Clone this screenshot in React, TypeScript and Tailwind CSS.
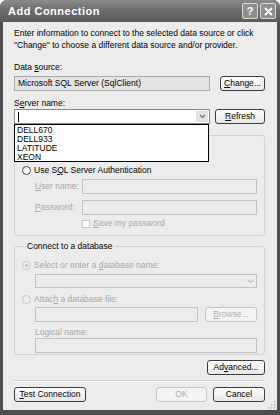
import React from 'react'

const U = ({ children }: { children: React.ReactNode }) => <span className="underline">{children}</span>

const XpButton = ({
  children,
  className = '',
  disabled = false,
}: {
  children: React.ReactNode
  className?: string
  disabled?: boolean
}) => (
  <div
    className={`h-[15px] flex items-center justify-center rounded-[3px] border text-[8.5px] ${
      disabled
        ? 'border-[#c4c4c4] text-[#b0b0b0] bg-[#f4f4f4]'
        : 'border-[#3c3c3c] text-black bg-gradient-to-b from-white to-[#e6e6e6]'
    } ${className}`}
  >
    {children}
  </div>
)

const DisabledBox = ({ className = '' }: { className?: string }) => (
  <div className={`h-[15px] border border-[#c2c2c2] bg-[#ececec] ${className}`} />
)

const Chevron = ({ color }: { color: string }) => (
  <svg width="7" height="5" viewBox="0 0 7 5">
    <path d="M1 1 L3.5 3.5 L6 1" fill="none" stroke={color} strokeWidth="1.2" />
  </svg>
)

const Radio = ({ disabled = false, dot = false }: { disabled?: boolean; dot?: boolean }) => (
  <div
    className={`w-[9px] h-[9px] rounded-full border flex items-center justify-center ${
      disabled ? 'border-[#c8c8c8] bg-[#ededed]' : 'border-[#444] bg-white'
    }`}
  >
    {dot && <div className="w-[3px] h-[3px] rounded-full bg-[#c0c0c0]" />}
  </div>
)

const servers = ['DELL670', 'DELL933', 'LATITUDE', 'XEON']

export default function App() {
  return (
    <div
      className="w-[280px] h-[415px] bg-[#4e4e4e] rounded-t-[7px] flex flex-col overflow-hidden"
      style={{ fontFamily: '"Liberation Sans", Arial, sans-serif' }}
    >
      {/* Title bar */}
      <div className="h-[22px] shrink-0 flex items-center pl-[8px] pr-[4px] bg-gradient-to-b from-[#8c8c8c] via-[#6a6a6a] to-[#5c5c5c]">
        <span className="text-white font-bold text-[11px] tracking-[0.5px] flex-1">Add Connection</span>
        <div className="flex gap-[2px]">
          <div className="w-[16px] h-[16px] rounded-[2px] border border-[#dcdcdc] bg-[#8e8e8e] flex items-center justify-center text-white font-bold text-[11px] leading-none">
            ?
          </div>
          <div className="w-[16px] h-[16px] rounded-[2px] border border-[#dcdcdc] bg-[#8e8e8e] flex items-center justify-center">
            <svg width="9" height="9" viewBox="0 0 9 9">
              <path d="M1 1 L8 8 M8 1 L1 8" stroke="white" strokeWidth="1.8" />
            </svg>
          </div>
        </div>
      </div>

      {/* Body */}
      <div className="flex-1 mx-[3px] mb-[5px] bg-[#ececec] flex flex-col pl-[11px] pr-[12px] text-[8.5px] text-black relative">
        <p className="mt-[5px] leading-[12px]">
          Enter information to connect to the selected data source or click
          <br />
          "Change" to choose a different data source and/or provider.
        </p>

        <div className="mt-[11px] h-[10px] leading-[10px]">
          Data <U>s</U>ource:
        </div>
        <div className="mt-[4px] flex gap-[10px]">
          <div className="w-[196px] h-[15px] border border-[#a8a8a8] bg-[#e4e4e4] flex items-center pl-[3px]">
            Microsoft SQL Server (SqlClient)
          </div>
          <XpButton className="flex-1">
            <span>
              <U>C</U>hange...
            </span>
          </XpButton>
        </div>

        <div className="mt-[7px] h-[10px] leading-[10px]">
          S<U>e</U>rver name:
        </div>
        <div className="mt-[1px] flex gap-[5px] relative z-10">
          <div className="w-[196px] h-[15px] border border-[#8a8a8a] bg-white flex items-center relative">
            <div className="ml-[3px] w-px h-[10px] bg-black" />
            <div className="ml-auto mr-[1px] w-[12px] h-[11px] bg-[#e2e2e2] flex items-center justify-center">
              <Chevron color="#6a6a6a" />
            </div>
            {/* Open dropdown list */}
            <div className="absolute left-[-1px] top-[14px] w-[195px] h-[38px] border border-black bg-white flex flex-col pt-px">
              {servers.map((s) => (
                <div key={s} className="h-[9px] leading-[9px] pl-[2px]">
                  {s}
                </div>
              ))}
            </div>
          </div>
          <XpButton className="flex-1">
            <span>
              <U>R</U>efresh
            </span>
          </XpButton>
        </div>

        {/* Log on to the server (top part hidden behind the open list) */}
        <div className="mt-[11px] h-[101px] border border-[#d4d4d4] rounded-[3px] px-[7px] pb-[6px]">
          <div className="h-[29px]" />
          <div className="flex items-center gap-[3px] h-[10px]">
            <Radio />
            <span>
              Use S<U>Q</U>L Server Authentication
            </span>
          </div>
          <div className="mt-[4px] flex items-center pl-[13px] text-[#a9a9a9]">
            <span className="w-[47px]">
              <U>U</U>ser name:
            </span>
            <DisabledBox className="flex-1" />
          </div>
          <div className="mt-[6px] flex items-center pl-[13px] text-[#a9a9a9]">
            <span className="w-[47px]">
              <U>P</U>assword:
            </span>
            <DisabledBox className="flex-1" />
          </div>
          <div className="mt-[4px] flex items-center gap-[3px] pl-[60px] text-[#a9a9a9] h-[9px]">
            <div className="w-[8px] h-[8px] border border-[#c8c8c8] bg-white" />
            <span>
              <U>S</U>ave my password
            </span>
          </div>
        </div>

        {/* Connect to a database */}
        <fieldset className="mt-[5px] h-[114px] border border-[#d4d4d4] rounded-[3px] px-[7px]">
          <legend className="ml-[3px] px-[2px] leading-[10px]">Connect to a database</legend>
          <div className="mt-[9px] flex items-center gap-[3px] h-[10px] text-[#a9a9a9]">
            <Radio disabled dot />
            <span>
              Select or enter a <U>d</U>atabase name:
            </span>
          </div>
          <div className="mt-[4px] ml-[13px] h-[14px] border border-[#c2c2c2] bg-[#ececec] flex items-center justify-end pr-[2px]">
            <Chevron color="#bdbdbd" />
          </div>
          <div className="mt-[6px] flex items-center gap-[3px] h-[10px] text-[#a9a9a9]">
            <Radio disabled />
            <span>
              Attac<U>h</U> a database file:
            </span>
          </div>
          <div className="mt-[3px] ml-[13px] flex gap-[7px]">
            <DisabledBox className="w-[163px]" />
            <XpButton disabled className="flex-1">
              <span>
                <U>B</U>rowse...
              </span>
            </XpButton>
          </div>
          <div className="mt-[5px] ml-[13px] h-[10px] leading-[10px] text-[#a9a9a9]">
            Lo<U>g</U>ical name:
          </div>
          <DisabledBox className="mt-[1px] ml-[13px]" />
        </fieldset>

        <div className="mt-[5px] flex justify-end">
          <XpButton className="w-[58px]">
            <span>
              Ad<U>v</U>anced...
            </span>
          </XpButton>
        </div>

        <div className="mt-[5px] border-t border-[#d0d0d0] border-b-white border-b" />

        <div className="mt-[5px] flex">
          <XpButton className="w-[72px]">
            <span>
              <U>T</U>est Connection
            </span>
          </XpButton>
          <XpButton disabled className="ml-auto w-[51px]">
            OK
          </XpButton>
          <XpButton className="ml-[6px] w-[52px]">Cancel</XpButton>
        </div>

        {/* Resize grip */}
        <svg className="absolute right-[1px] bottom-[1px]" width="9" height="9" viewBox="0 0 9 9">
          {[
            [7, 1],
            [7, 4],
            [4, 4],
            [7, 7],
            [4, 7],
            [1, 7],
          ].map(([x, y]) => (
            <rect key={`${x}-${y}`} x={x} y={y} width="1.5" height="1.5" fill="#b8b8b8" />
          ))}
        </svg>
      </div>
    </div>
  )
}
